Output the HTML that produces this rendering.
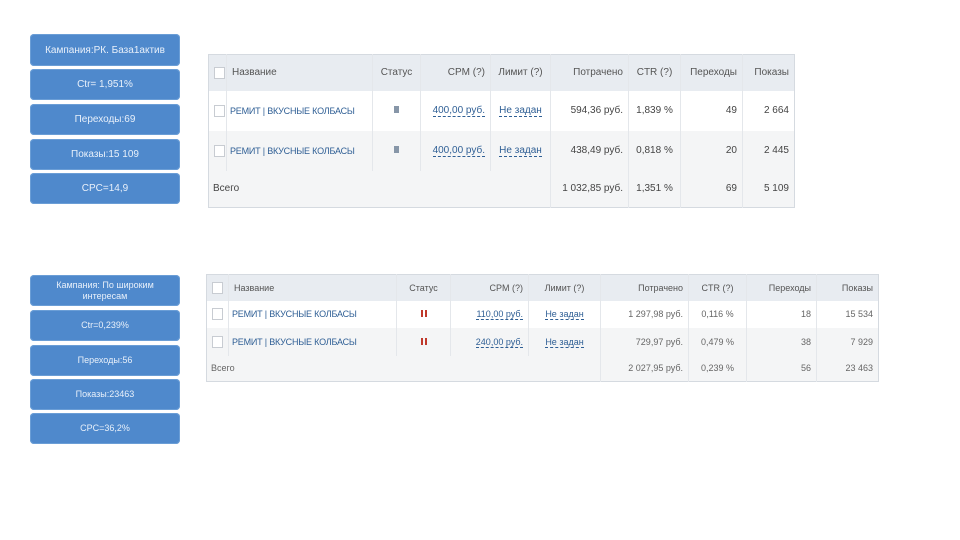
<!DOCTYPE html><html><head><meta charset="utf-8"><style>
body{margin:0;width:960px;height:540px;background:#fff;position:relative;overflow:hidden;font-family:"Liberation Sans",sans-serif}
.b{position:absolute;left:30px;width:150px;background:#4f89cc;border-radius:4px;color:#e8f0fa;font-size:10px;display:flex;align-items:center;justify-content:center;text-align:center;line-height:11px;box-shadow:0 0 0 1px #6b9ed6 inset}
.t{position:absolute;border-collapse:collapse;font-size:10px;color:#444;border:1px solid #d5dae0;table-layout:fixed}
.t td{padding:0 5px;white-space:nowrap;overflow:hidden;border-right:1px solid #e4e7eb}
.t td:last-child{border-right:none}
.h td{background:#e8ecf1;color:#555}
.g td{background:#f4f5f6}
.r{text-align:right}.c{text-align:center}
.n{color:#2f5f95;font-size:9px;letter-spacing:-0.2px}
.t td.n{padding:0 3px}
.u{color:#2f5f95;border-bottom:1px dashed #2f5f95}
.cb{display:inline-block;width:9px;height:10px;border:1px solid #c8ccd2;background:#fff;vertical-align:middle}
.sq{display:inline-block;width:5px;height:7px;background:#8796a8}
.pz{display:inline-block;width:2px;height:7px;border-left:2px solid #c0392b;border-right:2px solid #c0392b}
</style></head><body>
<div class="b" style="top:34px;height:32px">Кампания:РК. База1актив</div>
<div class="b" style="top:69px;height:31px">Ctr= 1,951%</div>
<div class="b" style="top:104px;height:31px">Переходы:69</div>
<div class="b" style="top:139px;height:31px">Показы:15 109</div>
<div class="b" style="top:173px;height:31px">CPC=14,9</div>
<div class="b" style="top:275px;height:31px;font-size:9px">Кампания: По широким<br>интересам</div>
<div class="b" style="top:310px;height:31px;font-size:9px">Ctr=0,239%</div>
<div class="b" style="top:345px;height:31px;font-size:9px">Переходы:56</div>
<div class="b" style="top:379px;height:31px;font-size:9px">Показы:23463</div>
<div class="b" style="top:413px;height:31px;font-size:9px">CPC=36,2%</div>

<table class="t" style="left:208px;top:54px;width:586px">
<colgroup><col style="width:18px"><col style="width:146px"><col style="width:48px"><col style="width:70px"><col style="width:60px"><col style="width:78px"><col style="width:52px"><col style="width:62px"><col style="width:52px"></colgroup>
<tr class="h" style="height:36px"><td><span class="cb"></span></td><td>Название</td><td class="c">Статус</td><td class="r">CPM (?)</td><td class="c">Лимит (?)</td><td class="r">Потрачено</td><td class="c">CTR (?)</td><td class="r">Переходы</td><td class="r">Показы</td></tr>
<tr style="height:40px"><td><span class="cb"></span></td><td class="n">РЕМИТ | ВКУСНЫЕ КОЛБАСЫ</td><td class="c"><span class="sq"></span></td><td class="r"><span class="u">400,00 руб.</span></td><td class="c"><span class="u">Не задан</span></td><td class="r">594,36 руб.</td><td class="c">1,839 %</td><td class="r">49</td><td class="r">2 664</td></tr>
<tr class="g" style="height:40px"><td><span class="cb"></span></td><td class="n">РЕМИТ | ВКУСНЫЕ КОЛБАСЫ</td><td class="c"><span class="sq"></span></td><td class="r"><span class="u">400,00 руб.</span></td><td class="c"><span class="u">Не задан</span></td><td class="r">438,49 руб.</td><td class="c">0,818 %</td><td class="r">20</td><td class="r">2 445</td></tr>
<tr class="g" style="height:37px"><td colspan="5" style="padding-left:4px">Всего</td><td class="r">1 032,85 руб.</td><td class="c">1,351 %</td><td class="r">69</td><td class="r">5 109</td></tr>
</table>

<table class="t" style="left:206px;top:274px;width:672px;font-size:9px;color:#666">
<colgroup><col style="width:22px"><col style="width:168px"><col style="width:54px"><col style="width:78px"><col style="width:72px"><col style="width:88px"><col style="width:58px"><col style="width:70px"><col style="width:62px"></colgroup>
<tr class="h" style="height:26px"><td><span class="cb"></span></td><td>Название</td><td class="c">Статус</td><td class="r">CPM (?)</td><td class="c">Лимит (?)</td><td class="r">Потрачено</td><td class="c">CTR (?)</td><td class="r">Переходы</td><td class="r">Показы</td></tr>
<tr style="height:27px"><td><span class="cb"></span></td><td class="n">РЕМИТ | ВКУСНЫЕ КОЛБАСЫ</td><td class="c"><span class="pz"></span></td><td class="r"><span class="u">110,00 руб.</span></td><td class="c"><span class="u">Не задан</span></td><td class="r">1 297,98 руб.</td><td class="c">0,116 %</td><td class="r">18</td><td class="r">15 534</td></tr>
<tr class="g" style="height:28px"><td><span class="cb"></span></td><td class="n">РЕМИТ | ВКУСНЫЕ КОЛБАСЫ</td><td class="c"><span class="pz"></span></td><td class="r"><span class="u">240,00 руб.</span></td><td class="c"><span class="u">Не задан</span></td><td class="r">729,97 руб.</td><td class="c">0,479 %</td><td class="r">38</td><td class="r">7 929</td></tr>
<tr class="g" style="height:26px"><td colspan="5" style="padding-left:4px">Всего</td><td class="r">2 027,95 руб.</td><td class="c">0,239 %</td><td class="r">56</td><td class="r">23 463</td></tr>
</table>
</body></html>
